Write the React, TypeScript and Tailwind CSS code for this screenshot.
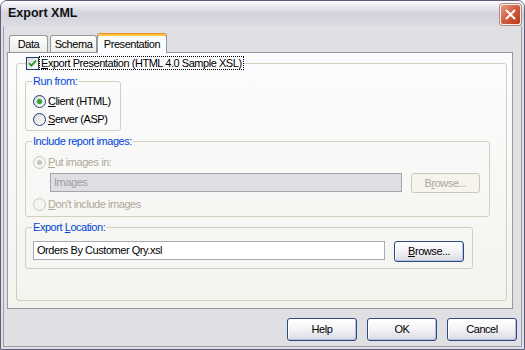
import React from "react";

function Radio({ checked, disabled }: { checked?: boolean; disabled?: boolean }) {
  return (
    <span
      className={
        disabled
          ? "w-[13px] h-[13px] shrink-0 rounded-full border border-[#cac8bb] bg-[#f4f4f0] flex items-center justify-center"
          : "w-[13px] h-[13px] shrink-0 rounded-full border border-[#1c3f73] bg-linear-to-br from-[#d8d8dc] to-white flex items-center justify-center"
      }
    >
      {checked && (
        <span
          className={
            disabled
              ? "w-[5px] h-[5px] rounded-full bg-[#c6c4b8]"
              : "w-[5px] h-[5px] rounded-full bg-[#2fa82f] shadow-[0_0_1px_#7fd07f]"
          }
        />
      )}
    </span>
  );
}

function Checkbox() {
  return (
    <span className="w-[13px] h-[13px] shrink-0 border border-[#1c3f73] bg-linear-to-br from-[#d8d8dc] to-white flex items-center justify-center">
      <svg width="9" height="9" viewBox="0 0 9 9">
        <path d="M1 4.2 L3.4 6.6 L8 1.6" stroke="#21a121" strokeWidth="1.9" fill="none" />
      </svg>
    </span>
  );
}

export default function App() {
  return (
    <div className="w-[525px] h-[350px] bg-[#e0dfe3] border border-[#5f5e78] rounded-t-[7px] flex flex-col overflow-hidden font-['Liberation_Sans',Arial,sans-serif] text-[11px] leading-[13px] text-black tracking-[-0.45px]">
      {/* title bar */}
      <div className="h-[25px] shrink-0 flex items-center justify-between pl-[7px] pr-[3px] bg-linear-to-b from-[#fbfbfd] via-[#d3d3de] to-[#dcdce6]">
        <span className="font-bold text-[12.5px] tracking-[0px] text-[#111]">Export XML</span>
        <div className="w-[21px] h-[21px] mt-[2px] rounded-[3px] border border-[#f4f0ee] bg-linear-to-br from-[#e59a86] via-[#d15a3c] to-[#b8391e] flex items-center justify-center shadow-[0_0_0_1px_#b28a80]">
          <svg width="11" height="11" viewBox="0 0 11 11">
            <path d="M1.5 1.5 L9.5 9.5 M9.5 1.5 L1.5 9.5" stroke="white" strokeWidth="2" strokeLinecap="round" />
          </svg>
        </div>
      </div>

      {/* frame */}
      <div className="flex-1 px-[2px] pb-[2px] flex flex-col">
        <div className="flex-1 flex flex-col border border-t-0 border-[#9e9db2]">
          {/* tabs */}
          <div className="h-[19px] mt-[7px] ml-[5px] flex items-start">
            <div className="mt-[2px] h-[17px] w-[39px] border border-b-0 border-[#919b9c] rounded-t-[3px] bg-linear-to-b from-white to-[#ecebe6] flex items-center justify-center">
              Data
            </div>
            <div className="mt-[2px] ml-[2px] h-[17px] w-[47px] border border-b-0 border-[#919b9c] rounded-t-[3px] bg-linear-to-b from-white to-[#ecebe6] flex items-center justify-center">
              Schema
            </div>
            <div className="relative z-10 h-[20px] w-[70px] border border-b-0 border-[#919b9c] border-t-[#e68b2c] rounded-t-[3px] bg-[#fcfcfe] shadow-[inset_0_2px_0_#ffc83c] flex items-center justify-center pt-[1px]">
              Presentation
            </div>
          </div>

          {/* panel */}
          <div className="ml-[3px] w-[506px] h-[257px] border border-[#919b9c] bg-linear-to-b from-[#fcfcfe] to-[#f4f3ee] pl-[8px] pt-[3px]">
            <fieldset className="w-[491px] h-[245px] border border-[#d0d0bf] rounded-[3px] pl-[8px] pr-0 pb-0 m-0">
              <legend className="ml-[1px] p-0">
                <div className="flex items-center h-[14px]">
                  <Checkbox />
                  <span className="border border-dotted border-black px-[1px] h-[14px] leading-[12px]">
                    <span className="underline">E</span>xport Presentation (HTML 4.0 Sample XSL)
                  </span>
                </div>
              </legend>

              {/* Run from */}
              <fieldset className="mt-[5px] w-[96px] border border-[#d0d0bf] rounded-[3px] pl-[6px] pr-0 pb-[2px] pt-[4px]">
                <legend className="px-[1px] text-[#0046d5]">Run from:</legend>
                <div className="h-[18px] flex items-center gap-[2px] ml-[1px]">
                  <Radio checked />
                  <span>
                    <span className="underline">C</span>lient (HTML)
                  </span>
                </div>
                <div className="h-[18px] flex items-center gap-[2px] ml-[1px]">
                  <Radio />
                  <span>
                    <span className="underline">S</span>erver (ASP)
                  </span>
                </div>
              </fieldset>

              {/* Include report images */}
              <fieldset className="mt-[4px] w-[465px] border border-[#d0d0bf] rounded-[3px] pl-[6px] pr-0 pb-[3px] pt-[5px]">
                <legend className="px-[1px] text-[#0046d5]">Include report images:</legend>
                <div className="h-[18px] flex items-center gap-[2px] ml-[1px] text-[#aca899]">
                  <Radio checked disabled />
                  <span>
                    <span className="underline">P</span>ut images in:
                  </span>
                </div>
                <div className="mt-[2px] ml-[18px] flex items-start">
                  <div className="w-[352px] h-[19px] border border-[#a5a4a8] bg-[#dfdfe3] text-[#9d9ca0] flex items-center pl-[3px]">
                    Images
                  </div>
                  <div className="ml-[9px] w-[69px] h-[20px] rounded-[3px] border border-[#cac8bb] bg-[#f5f4ef] text-[#aca899] flex items-center justify-center">
                    <span>
                      B<span className="underline">r</span>owse...
                    </span>
                  </div>
                </div>
                <div className="mt-[2px] h-[18px] flex items-center gap-[2px] ml-[1px] text-[#aca899]">
                  <Radio disabled />
                  <span>
                    <span className="underline">D</span>on't include images
                  </span>
                </div>
              </fieldset>

              {/* Export Location */}
              <fieldset className="mt-[4px] w-[448px] border border-[#d0d0bf] rounded-[3px] pl-[6px] pr-0 pb-[6px] pt-[7px]">
                <legend className="px-[1px] text-[#0046d5]">
                  Export <span className="underline">L</span>ocation:
                </legend>
                <div className="ml-[1px] flex items-start">
                  <div className="w-[352px] h-[19px] border border-[#a5acb5] bg-white flex items-center pl-[3px]">
                    Orders By Customer Qry.xsl
                  </div>
                  <div className="ml-[9px] w-[70px] h-[21px] rounded-[3px] border border-[#2b4a7d] bg-linear-to-b from-white via-[#f3f3f6] to-[#d9d9e2] shadow-[inset_-1px_-1px_0_#b7c1d9,inset_1px_1px_0_#ffffff] flex items-center justify-center">
                    <span>
                      <span className="underline">B</span>rowse...
                    </span>
                  </div>
                </div>
              </fieldset>
            </fieldset>
          </div>

          {/* buttons */}
          <div className="mt-[9px] flex justify-end gap-[10px] pr-[4px]">
            {["Help", "OK", "Cancel"].map((t) => (
              <div
                key={t}
                className="w-[70px] h-[23px] rounded-[3px] border border-[#2b4a7d] bg-linear-to-b from-white via-[#f3f3f6] to-[#d9d9e2] shadow-[inset_-1px_-1px_0_#b7c1d9,inset_1px_1px_0_#ffffff] flex items-center justify-center"
              >
                {t}
              </div>
            ))}
          </div>
        </div>
      </div>
    </div>
  );
}
